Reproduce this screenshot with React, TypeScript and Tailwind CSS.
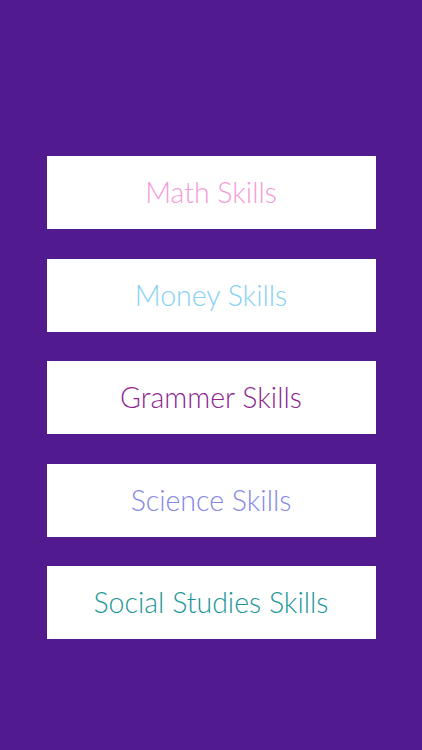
const skills = [
  { label: 'Math Skills', color: 'text-[#f59bd9]' },
  { label: 'Money Skills', color: 'text-[#86d1f4]' },
  { label: 'Grammer Skills', color: 'text-[#8e2590]' },
  { label: 'Science Skills', color: 'text-[#8587e6]' },
  { label: 'Social Studies Skills', color: 'text-[#1b9797]' },
]

export default function App() {
  return (
    <div className="flex h-[750px] w-full flex-col items-center gap-[29.5px] bg-[#521a8f] pt-[156px] font-['Lato',sans-serif]">
      {skills.map((s) => (
        <button
          key={s.label}
          className={`flex h-[73px] w-[329px] items-center justify-center bg-white text-[28.5px] font-light ${s.color}`}
        >
          {s.label}
        </button>
      ))}
    </div>
  )
}
